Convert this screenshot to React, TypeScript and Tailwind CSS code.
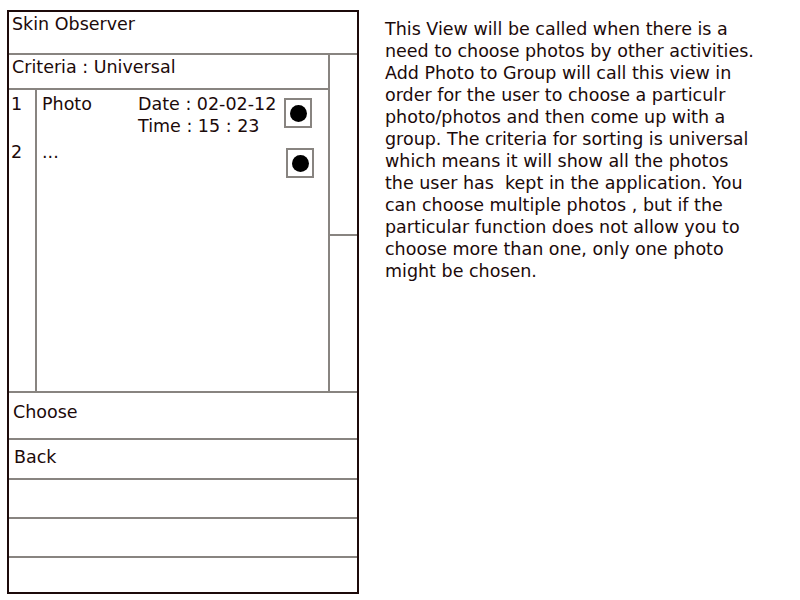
import React from 'react'

const lines = [
  'This View will be called when there is a',
  'need to choose photos by other activities.',
  'Add Photo to Group will call this view in',
  'order for the user to choose a particulr',
  'photo/photos and then come up with a',
  'group. The criteria for sorting is universal',
  'which means it will show all the photos',
  'the user has  kept in the application. You',
  'can choose multiple photos , but if the',
  'particular function does not allow you to',
  'choose more than one, only one photo',
  'might be chosen.',
]

function Radio() {
  return (
    <div className="w-[28px] h-[30px] border-2 border-[#888480] flex items-center justify-center">
      <div className="w-[17px] h-[17px] rounded-full bg-black" />
    </div>
  )
}

export default function App() {
  return (
    <div
      className="w-[800px] h-[600px] bg-white flex text-[#1c0a0a]"
      style={{ fontFamily: '"DejaVu Sans", sans-serif' }}
    >
      {/* phone mockup */}
      <div className="ml-[7px] mt-[10px] w-[352px] h-[584px] border-2 border-[#1c0a0a] flex flex-col text-[17.5px] leading-[22px]">
        <div className="h-[43px] border-b-2 border-[#888480] pl-[3px] pt-[1px]">Skin Observer</div>

        <div className="h-[338px] flex border-b-2 border-[#888480]">
          <div className="w-[321px] border-r-2 border-[#888480] flex flex-col">
            <div className="h-[35px] border-b-2 border-[#888480] pl-[3px] pt-[1px]">Criteria : Universal</div>
            <div className="flex-1 flex">
              <div className="w-[28px] border-r-2 border-[#888480] pl-[2px] pt-[3px]">
                <div className="h-[48px]">1</div>
                <div>2</div>
              </div>
              <div className="flex-1 pt-[3px] pl-[5px]">
                <div className="flex h-[48px]">
                  <div className="w-[96px]">Photo</div>
                  <div className="w-[146px]">
                    <div>Date : 02-02-12</div>
                    <div>Time : 15 : 23</div>
                  </div>
                  <div className="pt-[5px]">
                    <Radio />
                  </div>
                </div>
                <div className="flex">
                  <div className="w-[244px]">...</div>
                  <div className="pt-[7px]">
                    <Radio />
                  </div>
                </div>
              </div>
            </div>
          </div>
          <div className="flex-1 flex flex-col">
            <div className="h-[181px] border-b-2 border-[#888480]" />
          </div>
        </div>

        <div className="h-[47px] border-b-2 border-[#888480] pl-[4px] pt-[8px]">Choose</div>
        <div className="h-[40px] border-b-2 border-[#888480] pl-[5px] pt-[6px]">Back</div>
        <div className="h-[39px] border-b-2 border-[#888480]" />
        <div className="h-[39px] border-b-2 border-[#888480]" />
        <div className="flex-1" />
      </div>

      {/* description */}
      <div className="ml-[26px] mt-[18px] text-[17.5px] leading-[22px]">
        {lines.map((l, i) => (
          <div key={i} className="whitespace-pre">{l}</div>
        ))}
      </div>
    </div>
  )
}
